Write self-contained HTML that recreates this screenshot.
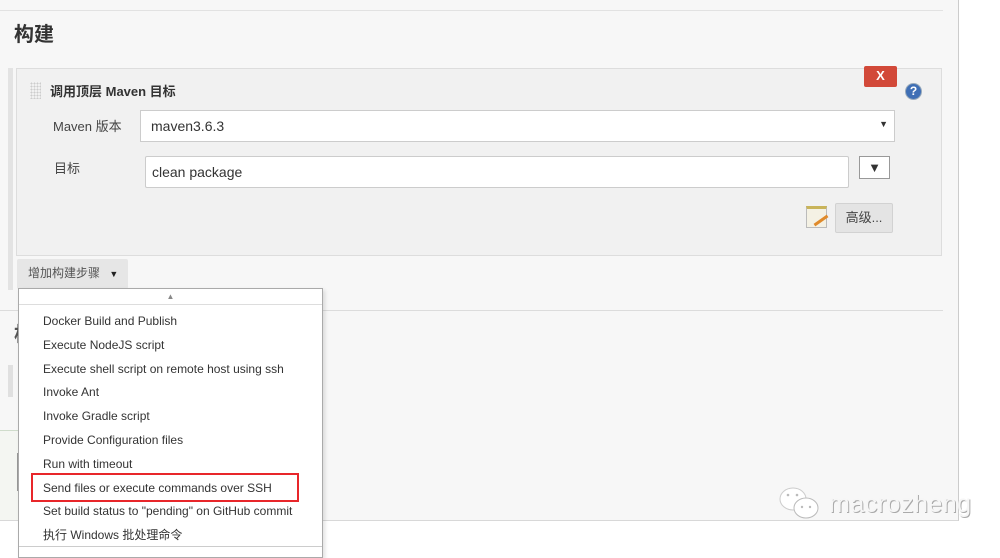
<!DOCTYPE html>
<html><head><meta charset="utf-8"><style>
*{margin:0;padding:0;box-sizing:border-box}
body{width:1000px;height:552px;position:relative;overflow:hidden;background:#fff;font-family:"Liberation Sans","Noto Sans CJK SC",sans-serif;font-size:13px;color:#333}
.a{position:absolute}
</style></head><body>
<div class="a" style="left:0;top:0;width:959px;height:521px;background:#f7f7f7;border-right:1px solid #ccc;border-bottom:1px solid #d8d8d8"></div>
<div class="a" style="left:0;top:10px;width:943px;height:1px;background:#e2e2e2"></div>
<div class="a" style="left:0;top:310px;width:943px;height:1px;background:#dcdcdc"></div>
<div class="a" style="left:14px;top:18px;font-size:20px;font-weight:bold;color:#333">构建</div>
<div class="a" style="left:14px;top:318px;font-size:20px;font-weight:bold;color:#555">构</div>
<div class="a" style="left:8px;top:365px;width:5px;height:32px;background:#e0e0e0"></div>
<div class="a" style="left:0;top:430px;width:20px;height:90px;background:#f4f6f2;border-top:1px solid #cfdccb"></div>
<div class="a" style="left:17px;top:453px;width:2px;height:38px;background:#999"></div>
<div class="a" style="left:8px;top:68px;width:5px;height:222px;background:#e3e3e3"></div>
<div class="a" style="left:16px;top:68px;width:926px;height:188px;background:#f1f1f1;border:1px solid #ddd"></div>
<div class="a" style="left:30px;top:82px;width:11px;height:17px;background-image:radial-gradient(#ccc 40%,transparent 45%);background-size:3px 3px"></div>
<div class="a" style="left:50px;top:81px;font-weight:bold;font-size:13px;color:#333">调用顶层 Maven 目标</div>
<div class="a" style="left:864px;top:66px;width:33px;height:21px;background:#d24939;border-radius:2px;color:#fff;font-weight:bold;font-size:13px;text-align:center;line-height:20px">X</div>
<div class="a" style="left:905px;top:83px;width:17px;height:17px;border-radius:50%;background:#3f6fb5;border:1px solid #9ab;color:#fff;font-weight:bold;font-size:12px;text-align:center;line-height:15px">?</div>
<div class="a" style="left:53px;top:116px;color:#444">Maven 版本</div>
<div class="a" style="left:140px;top:110px;width:755px;height:32px;background:#fff;border:1px solid #ccc;padding:7px 10px;font-size:14px">maven3.6.3<span style="position:absolute;right:6px;top:8px;font-size:9px">▼</span></div>
<div class="a" style="left:54px;top:158px;color:#444">目标</div>
<div class="a" style="left:145px;top:156px;width:704px;height:32px;background:#fff;border:1px solid #ccc;border-radius:2px;padding:7px 6px;font-size:14px">clean package</div>
<div class="a" style="left:859px;top:156px;width:31px;height:23px;background:#fff;border:1px solid #999;text-align:center;font-size:13px;line-height:21px">▼</div>
<div class="a" style="left:806px;top:206px;width:21px;height:22px;background:#f4f1e4;border:1px solid #bbb;border-top:3px solid #c9b45a"><div style="position:absolute;left:6px;top:10px;width:16px;height:3px;background:#e08a2a;transform:rotate(-35deg)"></div></div>
<div class="a" style="left:835px;top:203px;width:58px;height:30px;background:#e4e4e4;border:1px solid #d2d2d2;border-radius:2px;text-align:center;line-height:28px;color:#444">高级...</div>
<div class="a" style="left:17px;top:259px;width:111px;height:30px;background:#e6e6e6;border-radius:2px;color:#555;font-size:12px;line-height:28px;padding-left:11px">增加构建步骤 <span style="font-size:9px;margin-left:6px;color:#222">▼</span></div>
<div class="a" style="left:18px;top:288px;width:305px;height:270px;background:#fff;border:1px solid #aaa;box-shadow:2px 2px 4px rgba(0,0,0,.12)">
<div style="height:16px;border-bottom:1px solid #ddd;text-align:center;font-size:8px;color:#888;line-height:16px">▲</div>
<div style="position:absolute;left:24px;top:21px;font-size:12px;color:#333;line-height:23.8px">
<div>Docker Build and Publish</div><div>Execute NodeJS script</div><div>Execute shell script on remote host using ssh</div><div>Invoke Ant</div><div>Invoke Gradle script</div><div>Provide Configuration files</div><div>Run with timeout</div><div>Send files or execute commands over SSH</div><div>Set build status to "pending" on GitHub commit</div><div>执行 Windows 批处理命令</div></div>
<div style="position:absolute;left:0;top:257px;width:303px;height:1px;background:#ccc"></div>
</div>
<div class="a" style="left:31px;top:473px;width:268px;height:29px;border:2px solid #e8262a"></div>
<svg class="a" style="left:778px;top:486px" width="46" height="38" viewBox="0 0 46 38"><ellipse cx="15" cy="13" rx="13" ry="11" fill="#fff" stroke="#ccc"/><ellipse cx="28" cy="22" rx="12" ry="10" fill="#fff" stroke="#bbb"/><circle cx="10" cy="9" r="1.3" fill="#bbb"/><circle cx="19" cy="9" r="1.3" fill="#bbb"/><circle cx="24" cy="21" r="1.2" fill="#bbb"/><circle cx="32" cy="21" r="1.2" fill="#bbb"/></svg>
<div class="a" style="left:829px;top:490px;font-size:25px;color:#f6f6f6;text-shadow:1px 1px 0 #aaa;letter-spacing:0.5px">macrozheng</div>
</body></html>
